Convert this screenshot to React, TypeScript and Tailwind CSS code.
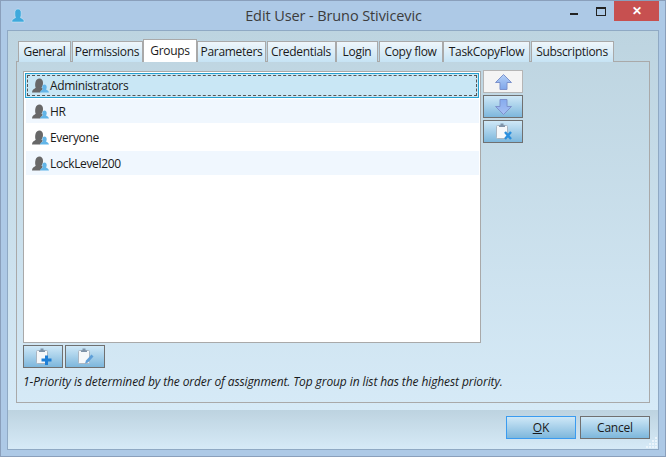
const font = { fontFamily: '"Open Sans", "Noto Sans", sans-serif' };

function GroupIcon() {
  return (
    <svg width="18" height="15" viewBox="0 0 18 15" className="shrink-0">
      <path d="M0 14.500c0-2.500 2-3.500 3.700-4.700C3 8 3 6 3.500 4 4 1.700 5.500.5 7.500.5 9.500.5 11 2.200 11 4.700c0 2-.5 3.500-1.500 5 .5.300 1 .6 1.500 1L8 14.500z" fill="#686868" />
      <path d="M8 14.500c.3-1.500 1.500-2.300 3-3 -.4-.7-.7-1.300-.7-2.300 0-1.600 1-2.700 2.200-2.700s2.200 1.100 2.200 2.700c0 1-.3 1.600-.7 2.300 1.500.7 2.700 1.500 3 3z" fill="#62b5e8" />
    </svg>
  );
}

function Arrow({ down }: { down?: boolean }) {
  const id = down ? "ad" : "au";
  return (
    <svg width="17" height="16" viewBox="0 0 17 16">
      <defs>
        <linearGradient id={id} x1="0" y1="0" x2="0" y2="1">
          <stop offset="0" stopColor={down ? "#86abee" : "#b4d0f7"} />
          <stop offset="1" stopColor={down ? "#a6c0f3" : "#7fa6ea"} />
        </linearGradient>
      </defs>
      <path d={down ? "M5 .5H12V7.500H16.500L8.500 15.500 .5 7.500H5z" : "M8.500 .5 16.500 8.500H12V15.500H5V8.500H.5z"} fill={`url(#${id})`} stroke="#7d92cc" strokeWidth="1" />
    </svg>
  );
}

function Clipboard({ badge }: { badge: "add" | "del" | "edit" }) {
  return (
    <svg width="17" height="17" viewBox="0 0 17 17">
      <rect x="1.500" y="2.500" width="11" height="13" rx="1" fill="#f6f8fa" stroke="#aab6c2" strokeWidth="1" />
      <path d="M4 4V2.500H5.500V.5H8.500V2.500H10V4z" fill="#7f93a8" />
      {badge === "add" && <path d="M10 7.500h3v3h3.500v3H13V17h-3v-3.500H6.500v-3H10z" fill="#1f7fd6" />}
      {badge === "del" && <path d="M10 9l6 7M16 9l-6 7" stroke="#2b8fdd" strokeWidth="2.400" fill="none" />}
      {badge === "edit" && <path d="M8 15.500l1-3 5.500-6 2 2-5.500 6z" fill="#5f9fd8" />}
    </svg>
  );
}

function IconButton({ children, light }: { children: React.ReactNode; light?: boolean }) {
  return (
    <div className={`w-[40px] h-[23px] flex items-center justify-center border ${light ? "border-[#b5b5b5] bg-[#f4f4f4]" : "border-[#707070] bg-gradient-to-b from-[#cfe8f7] to-[#7db7dc]"}`}>
      {children}
    </div>
  );
}

const tabs = [
  ["General", "w-[53px]"],
  ["Permissions", "w-[71px]"],
  ["Groups", "w-[54px]"],
  ["Parameters", "w-[69px]"],
  ["Credentials", "w-[69px]"],
  ["Login", "w-[42px]"],
  ["Copy flow", "w-[64px]"],
  ["TaskCopyFlow", "w-[87px]"],
  ["Subscriptions", "w-[83px]"],
];

const rows = ["HR", "Everyone", "LockLevel200"];

export default function App() {
  return (
    <div style={font} className="w-[666px] h-[457px] flex flex-col overflow-hidden border border-[#8a9fbb] bg-[#adc9e6] text-[12px] text-[#1a1a1a]">
      <div className="h-[29px] flex items-center relative shrink-0">
        <svg width="14" height="15" viewBox="0 0 14 15" className="ml-[10px] mb-[1px] shrink-0">
          <path d="M.8 14c0-2.500 1.700-3.500 3.700-4.300C4 8.500 3.800 7 3.800 5 3.800 2.500 5 1 7 1s3.200 1.500 3.200 4c0 2-.2 3.500-.7 4.700 2 .8 3.700 1.800 3.700 4.300z" fill="#3fa9dc" stroke="#d6ecfa" strokeWidth=".5" />
        </svg>
        <div className="flex-1 text-center text-[14.5px] tracking-[-0.1px] text-[#3c3c3c] mr-[23px] mt-[1px]">Edit User - Bruno Stivicevic</div>
        <div className="absolute top-0 right-[6px] flex items-start">
          <div className="w-[8px] h-[2px] bg-[#222] mt-[12px] mr-[18px]" />
          <div className="w-[10px] h-[9px] border border-[#222] border-t-2 mt-[6px] mr-[8px]" />
          <div className="w-[45px] h-[20px] bg-[#c75050] flex items-center justify-center text-white text-[12px] font-bold leading-none">✕</div>
        </div>
      </div>
      <div className="flex-1 mx-[6px] mb-[6px] flex flex-col border border-[#8fa9c4] min-h-0">
        <div className="flex-1 flex flex-col bg-gradient-to-b from-[#bdd4e0] to-[#d6eaf7] px-[8px] pt-[8px] pb-[7px] min-h-0">
          <div className="flex h-[23px] pl-[2px] shrink-0 items-end relative z-10 mb-[-1px]">
            {tabs.map(([t, w]) =>
              t === "Groups" ? (
                <div key={t} className={`${w} h-[23px] bg-white border border-b-0 border-[#a9a9a9] flex items-start justify-center pt-[2px] tracking-[-0.3px]`}>{t}</div>
              ) : (
                <div key={t} className={`${w} h-[21px] mr-[0.5px] bg-gradient-to-b from-[#eef6fb] to-[#c6e3f4] border border-b-0 border-[#a9a9a9] flex items-center justify-center whitespace-nowrap tracking-[-0.3px]`}>{t}</div>
              )
            )}
          </div>
          <div className="flex-1 border border-[#a9a9a9] pl-[6px] pt-[9px] flex flex-col min-h-0 w-[634px]">
            <div className="flex gap-[2px]">
              <div className="w-[458px] h-[272px] bg-white border border-[#a9a9a9] pt-[1px] px-[1px] tracking-[-0.35px]">
                <div className="h-[25px] mb-[1px] bg-[#c9e7f5] border border-[#27a0cf] p-[1px]">
                  <div className="h-full border border-dashed border-[#555] flex items-center pl-[4px]">
                    <GroupIcon /><span>Administrators</span>
                  </div>
                </div>
                {rows.map((r, i) => (
                  <div key={r} className={`h-[24px] mb-[2px] ml-[1px] flex items-center pl-[6px] pt-[1px] ${i % 2 === 0 ? "bg-[#f0f7fe]" : "bg-white"}`}>
                    <GroupIcon /><span>{r}</span>
                  </div>
                ))}
              </div>
              <div className="flex flex-col gap-[2px] mt-[-1px]">
                <IconButton light><Arrow /></IconButton>
                <IconButton><Arrow down /></IconButton>
                <IconButton><Clipboard badge="del" /></IconButton>
              </div>
            </div>
            <div className="flex gap-[2px] mt-[2px]">
              <IconButton><Clipboard badge="add" /></IconButton>
              <IconButton><Clipboard badge="edit" /></IconButton>
            </div>
            <div className="italic text-[12px] mt-[6px] leading-[16px] whitespace-nowrap tracking-[-0.1px]">1-Priority is determined by the order of assignment. Top group in list has the highest priority.</div>
          </div>
        </div>
        <div className="h-[39px] shrink-0 relative bg-gradient-to-b from-[#bdd3e0] to-[#d6eaf7] flex items-start justify-end gap-[4px] pt-[6px] pr-[8px]">
          <div className="w-[70px] h-[23px] border border-[#3a9bf0] bg-gradient-to-b from-[#cfe8f7] to-[#7db7dc] flex items-center justify-center"><span><u>O</u>K</span></div>
          <div className="w-[70px] h-[23px] border border-[#707070] bg-gradient-to-b from-[#cfe8f7] to-[#7db7dc] flex items-center justify-center tracking-[-0.2px]">Cancel</div>
          <svg width="11" height="11" viewBox="0 0 11 11" className="absolute right-[1px] bottom-[1px]" fill="#eaf4fb">
            <rect x="9" y="0" width="2" height="2" /><rect x="6" y="3" width="2" height="2" /><rect x="9" y="3" width="2" height="2" />
            <rect x="3" y="6" width="2" height="2" /><rect x="6" y="6" width="2" height="2" /><rect x="9" y="6" width="2" height="2" />
            <rect x="0" y="9" width="2" height="2" /><rect x="3" y="9" width="2" height="2" /><rect x="6" y="9" width="2" height="2" /><rect x="9" y="9" width="2" height="2" />
          </svg>
        </div>
      </div>
    </div>
  );
}
